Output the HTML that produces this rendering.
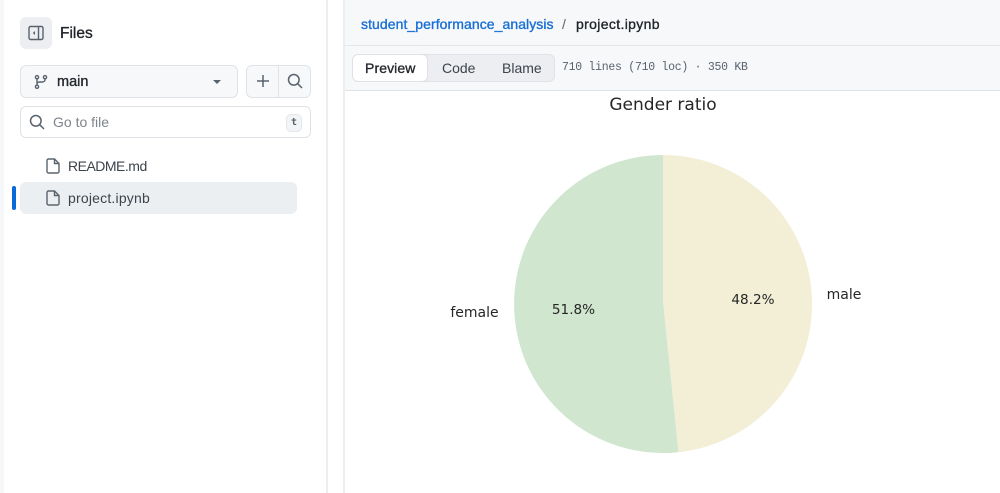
<!DOCTYPE html>
<html>
<head>
<meta charset="utf-8">
<style>
html,body{margin:0;padding:0;background:#fff;}
body{width:1000px;height:493px;overflow:hidden;position:relative;font-family:"DejaVu Sans","Liberation Sans",sans-serif;color:#1f2328;filter:blur(.35px);}
.a{position:absolute;box-sizing:border-box;white-space:nowrap;}
.btn{background:#f6f8fa;border:1px solid #dfe3e8;border-radius:6px;}
.m{font-family:'Liberation Sans',sans-serif;font-weight:400;-webkit-text-stroke:.35px currentColor;}
</style>
</head>
<body>
<div class="a" style="left:0;top:0;width:4px;height:493px;background:#f6f7f8"></div>
<div class="a" style="left:326px;top:0;width:2px;height:493px;background:#eceef0"></div>
<div class="a" style="left:343px;top:0;width:2px;height:493px;background:#eceef0"></div>

<div class="a" style="left:20px;top:17px;width:32px;height:32px;background:#eceef1;border-radius:6px"></div>
<svg class="a" style="left:28px;top:25px" width="16" height="16" viewBox="0 0 16 16" fill="none" stroke="#59636e" stroke-width="1.4"><rect x="1" y="1.500" width="14" height="13" rx="1.500"/><path d="M10.500 1.500v13"/><path d="M7 6v4L4.800 8z" fill="#59636e" stroke="none"/></svg>
<div class="a m" style="left:60px;top:24px;font-size:15.500px;line-height:20px;color:#1f2328">Files</div>

<div class="a btn" style="left:20px;top:65px;width:218px;height:33px"></div>
<svg class="a" style="left:33px;top:74px" width="16" height="16" viewBox="0 0 16 16" fill="none" stroke="#59636e" stroke-width="1.400"><circle cx="4" cy="3.200" r="1.600"/><circle cx="4" cy="12.800" r="1.600"/><circle cx="12" cy="3.200" r="1.600"/><path d="M4 4.800v6.400M12 4.800v.7c0 1.500-1 2.500-2.500 2.500H6.500C5 8 4 9 4 10"/></svg>
<div class="a m" style="left:57px;top:72px;font-size:14.500px;line-height:20px;color:#25292e">main</div>
<div class="a" style="left:213px;top:80px;width:0;height:0;border-left:4px solid transparent;border-right:4px solid transparent;border-top:4px solid #59636e"></div>

<div class="a btn" style="left:246px;top:65px;width:65px;height:33px"></div>
<div class="a" style="left:278px;top:66px;width:1px;height:31px;background:#dfe3e8"></div>
<svg class="a" style="left:255px;top:73px" width="16" height="16" viewBox="0 0 16 16" fill="none" stroke="#59636e" stroke-width="1.500"><path d="M8 2v12M2 8h12"/></svg>
<svg class="a" style="left:287px;top:73px" width="16" height="16" viewBox="0 0 16 16" fill="none" stroke="#59636e" stroke-width="1.500"><circle cx="6.800" cy="6.800" r="5.300"/><path d="M10.700 10.700L15 15"/></svg>

<div class="a" style="left:20px;top:106px;width:291px;height:32px;background:#fff;border:1px solid #dfe3e8;border-radius:6px"></div>
<svg class="a" style="left:29px;top:114px" width="16" height="16" viewBox="0 0 16 16" fill="none" stroke="#59636e" stroke-width="1.500"><circle cx="6.800" cy="6.800" r="5.300"/><path d="M10.700 10.700L15 15"/></svg>
<div class="a" style="left:53px;top:112px;font:14px/20px 'Liberation Sans',sans-serif;color:#7d848c">Go to file</div>
<div class="a" style="left:286px;top:114px;width:16px;height:18px;background:#f3f4f6;border:1px solid #e3e6ea;border-radius:5px;font:bold 10px/15px 'DejaVu Sans Mono',monospace;text-align:center;color:#59636e">t</div>

<svg class="a" style="left:45px;top:158px" width="16" height="16" viewBox="0 0 16 16" fill="none" stroke="#59636e" stroke-width="1.400"><path d="M3.500 1h6L14 5.500V13.500a1.500 1.500 0 0 1-1.500 1.500h-9A1.500 1.500 0 0 1 2 13.500V2.500A1.500 1.500 0 0 1 3.500 1z"/><path d="M9.500 1v4.500H14"/></svg>
<div class="a" style="left:68px;top:156px;font:14px/20px 'Liberation Sans',sans-serif;letter-spacing:-.5px;color:#3d444c">README.md</div>

<div class="a" style="left:12px;top:186px;width:4px;height:24px;background:#0969da;border-radius:2px"></div>
<div class="a" style="left:20px;top:182px;width:277px;height:32px;background:#eceff1;border-radius:6px"></div>
<svg class="a" style="left:45px;top:190px" width="16" height="16" viewBox="0 0 16 16" fill="none" stroke="#59636e" stroke-width="1.400"><path d="M3.500 1h6L14 5.500V13.500a1.500 1.500 0 0 1-1.500 1.500h-9A1.500 1.500 0 0 1 2 13.500V2.500A1.500 1.500 0 0 1 3.500 1z"/><path d="M9.500 1v4.500H14"/></svg>
<div class="a" style="left:68px;top:188px;font:14px/20px 'Liberation Sans',sans-serif;letter-spacing:.2px;color:#3d444c">project.ipynb</div>

<div class="a" style="left:345px;top:0;width:655px;height:46px;background:#f6f8fa;border-bottom:1px solid #e3e6ea"></div>
<div class="a m" style="left:361px;top:14px;font-size:14px;line-height:20px;letter-spacing:.07px;color:#1a6fd4;">student_performance_analysis</div>
<div class="a" style="left:562px;top:14px;font:14px/20px 'Liberation Sans',sans-serif;color:#59636e">/</div>
<div class="a m" style="left:576px;top:14px;font-size:14px;line-height:20px;letter-spacing:.35px;color:#1f2328">project.ipynb</div>

<div class="a" style="left:345px;top:46px;width:655px;height:45px;background:#f6f8fa;border-bottom:1px solid #dfe3e8"></div>
<div class="a" style="left:352px;top:54px;width:203px;height:28px;background:#eceef1;border:1px solid #dfe3e8;border-radius:6px"></div>
<div class="a" style="left:352px;top:54px;width:76px;height:28px;background:#fff;border:1px solid #dfe3e8;border-radius:6px"></div>
<div class="a m" style="left:365px;top:58px;font-size:14px;line-height:20px;letter-spacing:.1px;color:#25292e">Preview</div>
<div class="a" style="left:442px;top:58px;font:14px/20px 'Liberation Sans',sans-serif;color:#3d444c">Code</div>
<div class="a" style="left:502px;top:58px;font:14px/20px 'Liberation Sans',sans-serif;color:#3d444c">Blame</div>
<div class="a" style="left:562px;top:59px;font:11.500px/18px 'Liberation Mono',monospace;letter-spacing:-.27px;color:#59636e">710 lines (710 loc) · 350 KB</div>

<svg class="a" style="left:345px;top:91px" width="655" height="402" viewBox="345 91 655 402">
<path d="M663 302 L663 155 A149 149 0 0 1 678.500 452.200 Z" fill="#f2efd6"/>
<path d="M663 302 L678.500 452.200 A149 149 0 1 1 663 155 Z" fill="#d0e6cf"/>
<g font-family="'DejaVu Sans',sans-serif" fill="#262626">
<text x="663" y="110" text-anchor="middle" font-size="17">Gender ratio</text>
<text x="474.500" y="317" text-anchor="middle" font-size="14">female</text>
<text x="844" y="299" text-anchor="middle" font-size="14">male</text>
<text x="573.500" y="314" text-anchor="middle" font-size="13.600">51.8%</text>
<text x="753" y="304" text-anchor="middle" font-size="13.600">48.2%</text>
</g>
</svg>
</body>
</html>
